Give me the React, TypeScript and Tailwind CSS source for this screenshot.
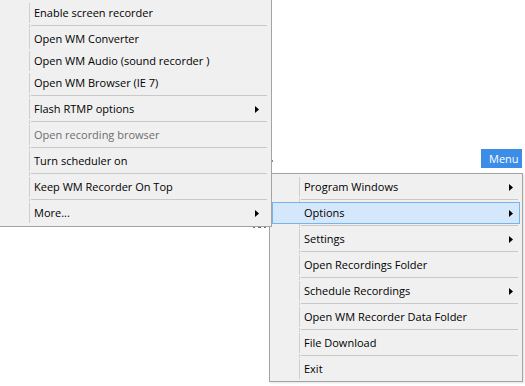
const Arrow = () => (
  <svg width="4" height="7" viewBox="0 0 4 7" className="shrink-0">
    <polygon points="0,0 4,3.5 0,7" fill="#000" />
  </svg>
);

type Item = {
  label?: string;
  sep?: boolean;
  sub?: boolean;
  disabled?: boolean;
  active?: boolean;
};

const leftItems: Item[] = [
  { label: "Enable screen recorder" },
  { sep: true },
  { label: "Open WM Converter" },
  { label: "Open WM Audio (sound recorder )" },
  { label: "Open WM Browser (IE 7)" },
  { sep: true },
  { label: "Flash RTMP options", sub: true },
  { sep: true },
  { label: "Open recording browser", disabled: true },
  { sep: true },
  { label: "Turn scheduler on" },
  { sep: true },
  { label: "Keep WM Recorder On Top" },
  { sep: true },
  { label: "More...", sub: true },
];

const rightItems: Item[] = [
  { label: "Program Windows", sub: true },
  { sep: true },
  { label: "Options", sub: true, active: true },
  { sep: true },
  { label: "Settings", sub: true },
  { sep: true },
  { label: "Open Recordings Folder" },
  { sep: true },
  { label: "Schedule Recordings", sub: true },
  { sep: true },
  { label: "Open WM Recorder Data Folder" },
  { sep: true },
  { label: "File Download" },
  { sep: true },
  { label: "Exit" },
];

const MenuRows = ({ items, arrowPad }: { items: Item[]; arrowPad: string }) => (
  <div className="flex flex-col">
    {items.map((it, i) =>
      it.sep ? (
        <div key={i} className="flex h-[4px]">
          <div className="w-[28px] shrink-0 border-r border-[#cfcfcf]" />
          <div className="flex-1 pt-[1px] pl-[1px] pr-[2px]">
            <div className="h-[1px] bg-[#c9c9c9]" />
          </div>
        </div>
      ) : (
        <div
          key={i}
          className={
            it.active
              ? "flex h-[22px] items-center border border-[#78b4ec] bg-[#d5e8fb]"
              : "flex h-[22px] items-center border border-transparent"
          }
        >
          <div
            className={
              it.active
                ? "h-full w-[27px] shrink-0"
                : "h-full w-[27px] shrink-0 border-r border-[#cfcfcf]"
            }
          />
          <span
            className={
              it.disabled
                ? "flex-1 pl-[4px] pb-[1px] text-[#6d6d6d]"
                : "flex-1 pl-[4px] pb-[1px] text-black"
            }
          >
            {it.label}
          </span>
          {it.sub && (
            <div className={arrowPad}>
              <Arrow />
            </div>
          )}
        </div>
      )
    )}
  </div>
);

export default function App() {
  return (
    <div className="relative h-[386px] w-[525px] overflow-hidden bg-white font-['Open_Sans',sans-serif] text-[11px] leading-none">
      <button className="absolute left-[481px] top-[149px] flex h-[19px] w-[41px] items-center justify-start bg-[#3b8de8] pb-[1px] pl-[8px] text-[11px] text-white">
        Menu
      </button>

      <div className="absolute left-[269px] top-[173px] w-[254px] border border-[#a3a3a3] bg-[#f0f0f0] px-[2px] pt-[2px] pb-[1px] shadow-[1px_1px_2px_rgba(0,0,0,0.12)]">
        <MenuRows items={rightItems} arrowPad="pr-[6px]" />
      </div>

      <div className="absolute left-0 top-[-1px] z-10 w-[272px] border border-l-0 border-[#a3a3a3] bg-[#f0f0f0] px-[2px] py-[2px]">
        <MenuRows items={leftItems} arrowPad="pr-[9px]" />
      </div>

      <span className="absolute left-[272px] top-[160px] h-[2px] w-[1px] bg-[#8a8a8a]" />
      <span className="absolute left-[253px] top-[227px] h-[1px] w-[2px] bg-[#6a6a6a]" />
      <span className="absolute left-[258px] top-[227px] h-[1px] w-[3px] bg-[#6a6a6a]" />
      <span className="absolute left-[264px] top-[227px] h-[1px] w-[2px] bg-[#6a6a6a]" />
    </div>
  );
}
